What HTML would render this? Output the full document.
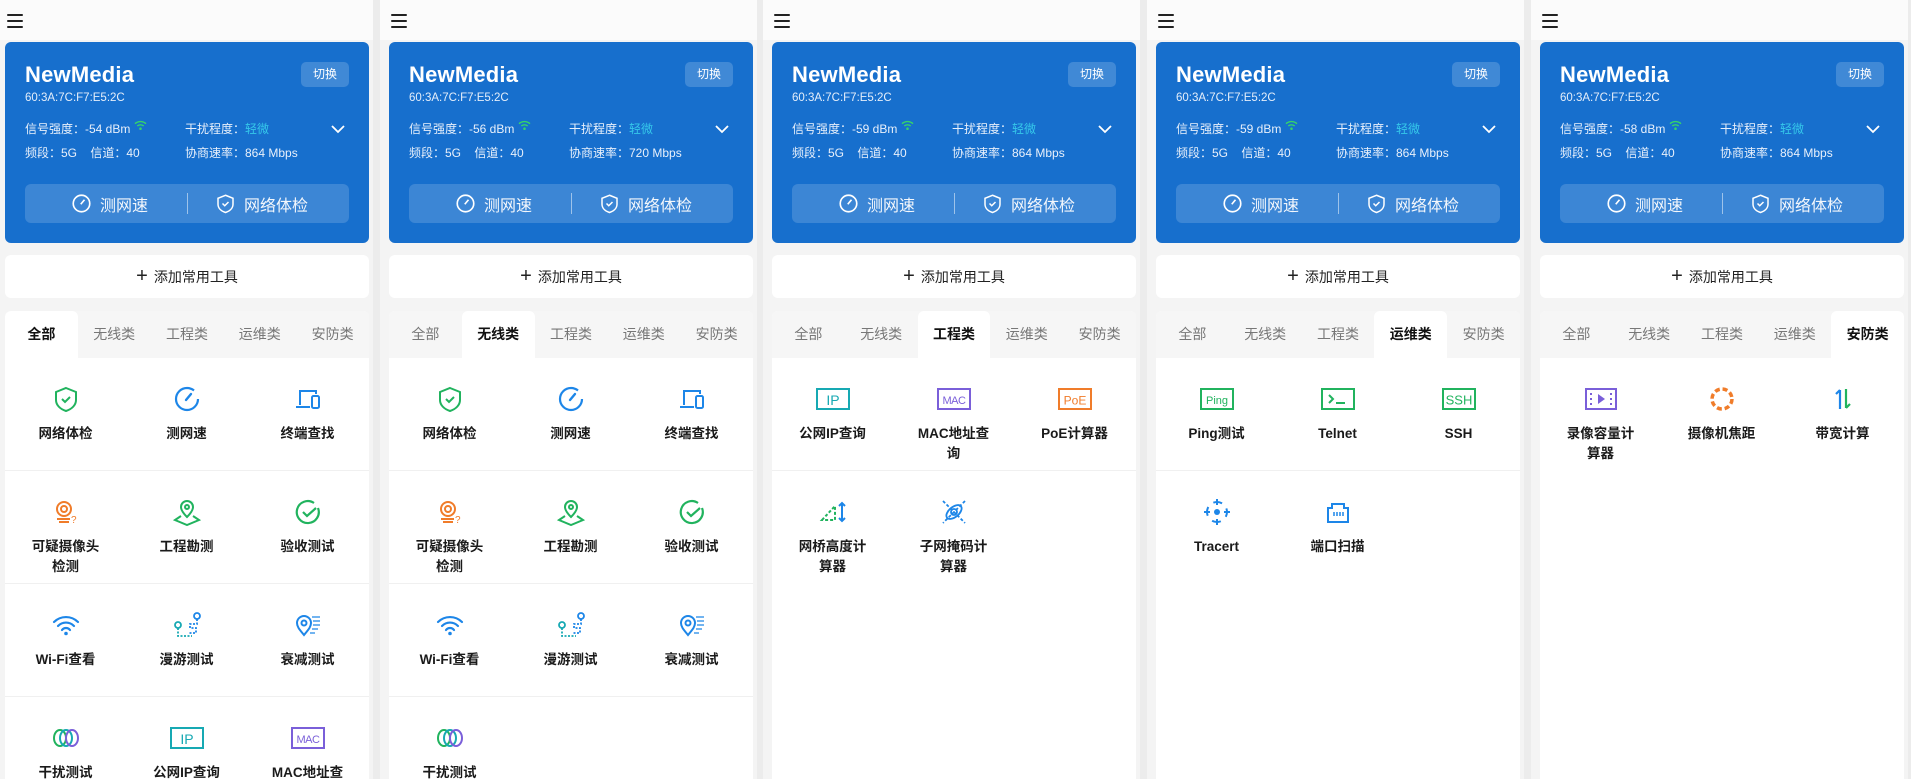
<!DOCTYPE html>
<html><head><meta charset="utf-8">
<style>
*{margin:0;padding:0;box-sizing:border-box}
body{width:1911px;height:779px;overflow:hidden;background:#ececec;font-family:"Liberation Sans","Noto Sans CJK SC",sans-serif;position:relative}
.p{position:absolute;top:0;width:377px;height:779px;background:#f4f4f4;overflow:hidden}
.hd{position:absolute;left:0;top:0;width:100%;height:40px;background:#fbfbfb}
.hb{position:absolute;left:11px;top:14px;width:16px;height:14px}
.hb i{display:block;height:2px;background:#222;margin-bottom:4px;border-radius:1px}
.card{position:absolute;left:9px;top:42px;width:364px;height:201px;background:#176fcd;border-radius:6px;color:#fff}
.nm{position:absolute;left:20px;top:20px;font-size:22px;font-weight:bold;letter-spacing:.2px}
.mac{position:absolute;left:20px;top:50px;font-size:11.5px;color:#e4eefa}
.sw{position:absolute;right:20px;top:20px;width:48px;height:25px;background:rgba(255,255,255,.18);border-radius:5px;font-size:12px;text-align:center;line-height:25px}
.r{position:absolute;font-size:12px;color:#e8f0fb;white-space:nowrap}
.chev{position:absolute;right:24px;top:82px}
.bar{position:absolute;left:20px;top:142px;width:324px;height:39px;background:rgba(255,255,255,.16);border-radius:6px;font-size:16px;color:#f3f7fc}
.bar .a,.bar .b{position:absolute;top:0;height:39px;display:flex;align-items:center;gap:8px}
.bar .a{left:46px}.bar .b{left:190px}
.bar .d{position:absolute;left:162px;top:9px;width:1px;height:21px;background:rgba(255,255,255,.5)}
.add{position:absolute;left:9px;top:255px;width:364px;height:43px;background:#fff;border-radius:6px;font-size:14px;color:#222;display:flex;align-items:center;justify-content:center;gap:6px}
.tl{position:absolute;left:9px;top:311px;width:364px;height:470px;background:#fff;border-radius:6px 6px 0 0;overflow:hidden}
.tabs{height:47px;background:#f6f6f6;display:flex}
.tabs div{width:72.8px;text-align:center;line-height:47px;font-size:14px;color:#777}
.tabs div.on{background:#fff;color:#111;font-weight:bold;border-radius:6px 6px 0 0}
.row{height:113px;border-bottom:1px solid #f0f0f0;display:flex}
.row.nb{border-bottom:none}
.it{width:121px;text-align:center;padding-top:27px}
.it svg{width:28px;height:28px;display:block;margin:0 auto}
.it p{width:70px;margin:11px auto 0;font-size:13.5px;font-weight:bold;color:#1a1a1a;line-height:20px;word-break:break-all}
</style></head><body>
<svg width="0" height="0" style="position:absolute">
<defs>
<symbol id="shield" viewBox="0 0 28 28"><path d="M14 3l10 4v8c0 5-4 9-10 11C8 24 4 20 4 15V7z" fill="none" stroke="#21b35e" stroke-width="2"/><path d="M10 14l3 3 5-5" fill="none" stroke="#21b35e" stroke-width="2"/></symbol>
<symbol id="speed" viewBox="0 0 28 28"><path d="M14 3a11 11 0 1 0 11 11" fill="none" stroke="#1d86e8" stroke-width="2.2"/><path d="M14 3a11 11 0 0 1 7 2.5" fill="none" stroke="#1d86e8" stroke-width="2.2"/><path d="M13 15l5-6" stroke="#1d86e8" stroke-width="2.4" stroke-linecap="round"/></symbol>
<symbol id="term" viewBox="0 0 28 28"><path d="M6 20V6h16v3" fill="none" stroke="#1d86e8" stroke-width="2"/><path d="M2 22h14" stroke="#1d86e8" stroke-width="2"/><rect x="18" y="11" width="7" height="12" rx="1.5" fill="none" stroke="#1d86e8" stroke-width="2"/></symbol>
<symbol id="cam" viewBox="0 0 28 28"><circle cx="12" cy="11" r="7" fill="none" stroke="#f07c2a" stroke-width="2"/><circle cx="12" cy="11" r="3" fill="none" stroke="#f07c2a" stroke-width="2"/><path d="M5 21h13M7 24h10" stroke="#f07c2a" stroke-width="2"/><text x="19" y="25" font-size="10" fill="#f07c2a" font-family="Liberation Sans">?</text></symbol>
<symbol id="survey" viewBox="0 0 28 28"><path d="M14 19c-4-4-6-7-6-10a6 6 0 0 1 12 0c0 3-2 6-6 10z" fill="none" stroke="#21b35e" stroke-width="2"/><circle cx="14" cy="9" r="2" fill="none" stroke="#21b35e" stroke-width="2"/><path d="M8 18l-6 4 12 5 12-5-6-4" fill="none" stroke="#21b35e" stroke-width="2"/></symbol>
<symbol id="check" viewBox="0 0 28 28"><path d="M24 10a11 11 0 1 1-4-5" fill="none" stroke="#21b35e" stroke-width="2.2"/><path d="M9 14l4 4 9-8" fill="none" stroke="#21b35e" stroke-width="2.2"/></symbol>
<symbol id="wifi" viewBox="0 0 28 28"><path d="M2 11a17 17 0 0 1 24 0M6 15a11 11 0 0 1 16 0M10 19a5 5 0 0 1 8 0" fill="none" stroke="#1d86e8" stroke-width="2.2" stroke-linecap="round"/><circle cx="14" cy="22.5" r="1.8" fill="#1d86e8"/></symbol>
<symbol id="roam" viewBox="0 0 28 28"><circle cx="5" cy="14" r="3" fill="none" stroke="#17a9b3" stroke-width="1.8"/><path d="M5 17v8h14" fill="none" stroke="#17a9b3" stroke-width="1.8" stroke-dasharray="2 1.5"/><circle cx="24" cy="5" r="3" fill="none" stroke="#1d86e8" stroke-width="1.8"/><path d="M24 8v5h-7v4h6v5h-8" fill="none" stroke="#1d86e8" stroke-width="1.8" stroke-dasharray="2 1.5"/></symbol>
<symbol id="atten" viewBox="0 0 28 28"><path d="M10 24c-4-5-7-8-7-12a7 7 0 0 1 14 0c0 4-3 7-7 12z" fill="none" stroke="#1d86e8" stroke-width="2"/><circle cx="10" cy="12" r="2.5" fill="none" stroke="#1d86e8" stroke-width="2"/><path d="M18 6h8M19 10h7M19 14h7M18 18h6M16 22h5" stroke="#1d86e8" stroke-width="1.3"/></symbol>
<symbol id="interf" viewBox="0 0 28 28"><ellipse cx="8" cy="14" rx="6" ry="8" fill="none" stroke="#21b35e" stroke-width="2"/><ellipse cx="14" cy="14" rx="6" ry="8" fill="none" stroke="#17a9b3" stroke-width="2"/><ellipse cx="20" cy="14" rx="6" ry="8" fill="none" stroke="#7a5fd9" stroke-width="2"/></symbol>
<symbol id="ip" viewBox="0 0 34 28"><rect x="1" y="4" width="32" height="20" fill="none" stroke="#17a9b3" stroke-width="2"/><text x="17" y="20" text-anchor="middle" font-size="14" fill="#17a9b3" font-family="Liberation Sans">IP</text></symbol>
<symbol id="mac" viewBox="0 0 34 28"><rect x="1" y="4" width="32" height="20" fill="none" stroke="#7a5fd9" stroke-width="2"/><text x="17" y="19" text-anchor="middle" font-size="11" fill="#7a5fd9" font-family="Liberation Sans" letter-spacing="-0.5">MAC</text></symbol>
<symbol id="poe" viewBox="0 0 34 28"><rect x="1" y="4" width="32" height="20" fill="none" stroke="#f07c2a" stroke-width="2"/><text x="17" y="19.5" text-anchor="middle" font-size="12" fill="#f07c2a" font-family="Liberation Sans">PoE</text></symbol>
<symbol id="bridge" viewBox="0 0 28 28"><path d="M3 22L16 8v14z" fill="none" stroke="#21b35e" stroke-width="2" stroke-dasharray="3 2"/><path d="M23 5v18M20 8l3-3 3 3M20 20l3 3 3-3" fill="none" stroke="#1d86e8" stroke-width="2"/></symbol>
<symbol id="subnet" viewBox="0 0 28 28"><path d="M3 3l22 22M25 3L3 25" stroke="#1d86e8" stroke-width="1.8" stroke-dasharray="3 2"/><ellipse cx="14" cy="14" rx="9" ry="5" transform="rotate(-40 14 14)" fill="none" stroke="#1d86e8" stroke-width="1.8"/><circle cx="14" cy="14" r="3" fill="none" stroke="#1d86e8" stroke-width="1.8"/></symbol>
<symbol id="ping" viewBox="0 0 34 28"><rect x="1" y="4" width="32" height="20" fill="none" stroke="#21b35e" stroke-width="2"/><text x="17" y="19" text-anchor="middle" font-size="11" fill="#21b35e" font-family="Liberation Sans">Ping</text></symbol>
<symbol id="telnet" viewBox="0 0 34 28"><rect x="1" y="4" width="32" height="20" fill="none" stroke="#21b35e" stroke-width="2"/><path d="M8 10l4 4-4 4M15 18h9" fill="none" stroke="#21b35e" stroke-width="2"/></symbol>
<symbol id="ssh" viewBox="0 0 34 28"><rect x="1" y="4" width="32" height="20" fill="none" stroke="#21b35e" stroke-width="2"/><text x="17" y="19.5" text-anchor="middle" font-size="13" fill="#21b35e" font-family="Liberation Sans">SSH</text></symbol>
<symbol id="tracert" viewBox="0 0 28 28"><circle cx="14" cy="14" r="10" fill="none" stroke="#1d86e8" stroke-width="2" stroke-dasharray="9 6.7" stroke-dashoffset="4"/><path d="M14 1v6M14 21v6M1 14h6M21 14h6" stroke="#1d86e8" stroke-width="2"/><circle cx="14" cy="14" r="3" fill="#1d86e8"/></symbol>
<symbol id="port" viewBox="0 0 28 28"><path d="M4 10h4V6h12v4h4v14H4z" fill="none" stroke="#1d86e8" stroke-width="2"/><path d="M10 14v4M13 14v4M16 14v4M19 14v4" stroke="#1d86e8" stroke-width="1.5"/></symbol>
<symbol id="video" viewBox="0 0 34 28"><rect x="2" y="4" width="30" height="20" fill="none" stroke="#7a5fd9" stroke-width="2"/><path d="M14 9v10l7-5z" fill="#7a5fd9"/><path d="M7 8v2M7 13v2M7 18v2M27 8v2M27 13v2M27 18v2" stroke="#7a5fd9" stroke-width="2"/></symbol>
<symbol id="lens" viewBox="0 0 28 28"><circle cx="14" cy="14" r="10" fill="none" stroke="#f07c2a" stroke-width="3.5" stroke-dasharray="5 2.9"/></symbol>
<symbol id="bw" viewBox="0 0 28 28"><path d="M11 24V5M7 9l4-4" fill="none" stroke="#1d86e8" stroke-width="2.2"/><path d="M17 4v19M21 19l-4 4" fill="none" stroke="#21b35e" stroke-width="2.2"/></symbol>
<symbol id="swifi" viewBox="0 0 14 12"><path d="M1 4a9 9 0 0 1 12 0M3.5 6.5a5.5 5.5 0 0 1 7 0" fill="none" stroke="#36d36a" stroke-width="1.6"/><circle cx="7" cy="9.5" r="1.4" fill="#36d36a"/></symbol>
<symbol id="bspd" viewBox="0 0 28 28"><path d="M14 3a11 11 0 1 0 11 11A11 11 0 0 0 14 3zM13 15l5-6" fill="none" stroke="#fff" stroke-width="2.2"/></symbol>
<symbol id="bshd" viewBox="0 0 28 28"><path d="M14 3l10 4v8c0 5-4 9-10 11C8 24 4 20 4 15V7z M10 14l3 3 5-5" fill="none" stroke="#fff" stroke-width="2"/></symbol>
</defs></svg>

<div class="p" style="left:-4px">
<div class="hd"><div class="hb"><i></i><i></i><i></i></div></div>
<div class="card"><div class="nm">NewMedia</div><div class="mac">60:3A:7C:F7:E5:2C</div><div class="sw">切换</div>
<div class="r" style="left:20px;top:78px">信号强度：-54 dBm <svg width="13" height="11" style="vertical-align:2px"><use href="#swifi"/></svg></div>
<div class="r" style="left:180px;top:78px">干扰程度：<span style="color:#35c8ea">轻微</span></div>
<div class="r" style="left:20px;top:102px">频段：5G&nbsp;&nbsp;&nbsp; 信道：40</div>
<div class="r" style="left:180px;top:102px">协商速率：864 Mbps</div>
<svg class="chev" width="14" height="10"><path d="M1 2l6 6 6-6" fill="none" stroke="#fff" stroke-width="1.8"/></svg>
<div class="bar"><div class="a"><svg width="21" height="21"><use href="#bspd"/></svg>测网速</div><div class="d"></div><div class="b"><svg width="21" height="21"><use href="#bshd"/></svg>网络体检</div></div></div>
<div class="add"><span style="font-size:20px;font-weight:300">+</span>添加常用工具</div>
<div class="tl"><div class="tabs"><div class="on">全部</div><div>无线类</div><div>工程类</div><div>运维类</div><div>安防类</div></div>
<div class="row"><div class="it"><svg><use href="#shield"/></svg><p>网络体检</p></div><div class="it"><svg><use href="#speed"/></svg><p>测网速</p></div><div class="it"><svg><use href="#term"/></svg><p>终端查找</p></div></div>
<div class="row"><div class="it"><svg><use href="#cam"/></svg><p>可疑摄像头检测</p></div><div class="it"><svg><use href="#survey"/></svg><p>工程勘测</p></div><div class="it"><svg><use href="#check"/></svg><p>验收测试</p></div></div>
<div class="row"><div class="it"><svg><use href="#wifi"/></svg><p>Wi-Fi查看</p></div><div class="it"><svg><use href="#roam"/></svg><p>漫游测试</p></div><div class="it"><svg><use href="#atten"/></svg><p>衰减测试</p></div></div>
<div class="row"><div class="it"><svg><use href="#interf"/></svg><p>干扰测试</p></div><div class="it"><svg viewBox="0 0 34 28" style="width:34px"><use href="#ip"/></svg><p style="width:90px">公网IP查询</p></div><div class="it"><svg viewBox="0 0 34 28" style="width:34px"><use href="#mac"/></svg><p style="width:80px">MAC地址查询</p></div></div>
</div></div>

<div class="p" style="left:380px">
<div class="hd"><div class="hb"><i></i><i></i><i></i></div></div>
<div class="card"><div class="nm">NewMedia</div><div class="mac">60:3A:7C:F7:E5:2C</div><div class="sw">切换</div>
<div class="r" style="left:20px;top:78px">信号强度：-56 dBm <svg width="13" height="11" style="vertical-align:2px"><use href="#swifi"/></svg></div>
<div class="r" style="left:180px;top:78px">干扰程度：<span style="color:#35c8ea">轻微</span></div>
<div class="r" style="left:20px;top:102px">频段：5G&nbsp;&nbsp;&nbsp; 信道：40</div>
<div class="r" style="left:180px;top:102px">协商速率：720 Mbps</div>
<svg class="chev" width="14" height="10"><path d="M1 2l6 6 6-6" fill="none" stroke="#fff" stroke-width="1.8"/></svg>
<div class="bar"><div class="a"><svg width="21" height="21"><use href="#bspd"/></svg>测网速</div><div class="d"></div><div class="b"><svg width="21" height="21"><use href="#bshd"/></svg>网络体检</div></div></div>
<div class="add"><span style="font-size:20px;font-weight:300">+</span>添加常用工具</div>
<div class="tl"><div class="tabs"><div>全部</div><div class="on">无线类</div><div>工程类</div><div>运维类</div><div>安防类</div></div>
<div class="row"><div class="it"><svg><use href="#shield"/></svg><p>网络体检</p></div><div class="it"><svg><use href="#speed"/></svg><p>测网速</p></div><div class="it"><svg><use href="#term"/></svg><p>终端查找</p></div></div>
<div class="row"><div class="it"><svg><use href="#cam"/></svg><p>可疑摄像头检测</p></div><div class="it"><svg><use href="#survey"/></svg><p>工程勘测</p></div><div class="it"><svg><use href="#check"/></svg><p>验收测试</p></div></div>
<div class="row"><div class="it"><svg><use href="#wifi"/></svg><p>Wi-Fi查看</p></div><div class="it"><svg><use href="#roam"/></svg><p>漫游测试</p></div><div class="it"><svg><use href="#atten"/></svg><p>衰减测试</p></div></div>
<div class="row nb"><div class="it"><svg><use href="#interf"/></svg><p>干扰测试</p></div></div>
</div></div>

<div class="p" style="left:763px">
<div class="hd"><div class="hb"><i></i><i></i><i></i></div></div>
<div class="card"><div class="nm">NewMedia</div><div class="mac">60:3A:7C:F7:E5:2C</div><div class="sw">切换</div>
<div class="r" style="left:20px;top:78px">信号强度：-59 dBm <svg width="13" height="11" style="vertical-align:2px"><use href="#swifi"/></svg></div>
<div class="r" style="left:180px;top:78px">干扰程度：<span style="color:#35c8ea">轻微</span></div>
<div class="r" style="left:20px;top:102px">频段：5G&nbsp;&nbsp;&nbsp; 信道：40</div>
<div class="r" style="left:180px;top:102px">协商速率：864 Mbps</div>
<svg class="chev" width="14" height="10"><path d="M1 2l6 6 6-6" fill="none" stroke="#fff" stroke-width="1.8"/></svg>
<div class="bar"><div class="a"><svg width="21" height="21"><use href="#bspd"/></svg>测网速</div><div class="d"></div><div class="b"><svg width="21" height="21"><use href="#bshd"/></svg>网络体检</div></div></div>
<div class="add"><span style="font-size:20px;font-weight:300">+</span>添加常用工具</div>
<div class="tl"><div class="tabs"><div>全部</div><div>无线类</div><div class="on">工程类</div><div>运维类</div><div>安防类</div></div>
<div class="row"><div class="it"><svg viewBox="0 0 34 28" style="width:34px"><use href="#ip"/></svg><p style="width:90px">公网IP查询</p></div><div class="it"><svg viewBox="0 0 34 28" style="width:34px"><use href="#mac"/></svg><p style="width:80px">MAC地址查询</p></div><div class="it"><svg viewBox="0 0 34 28" style="width:34px"><use href="#poe"/></svg><p style="width:100px">PoE计算器</p></div></div>
<div class="row nb"><div class="it"><svg><use href="#bridge"/></svg><p>网桥高度计算器</p></div><div class="it"><svg><use href="#subnet"/></svg><p>子网掩码计算器</p></div></div>
</div></div>

<div class="p" style="left:1147px">
<div class="hd"><div class="hb"><i></i><i></i><i></i></div></div>
<div class="card"><div class="nm">NewMedia</div><div class="mac">60:3A:7C:F7:E5:2C</div><div class="sw">切换</div>
<div class="r" style="left:20px;top:78px">信号强度：-59 dBm <svg width="13" height="11" style="vertical-align:2px"><use href="#swifi"/></svg></div>
<div class="r" style="left:180px;top:78px">干扰程度：<span style="color:#35c8ea">轻微</span></div>
<div class="r" style="left:20px;top:102px">频段：5G&nbsp;&nbsp;&nbsp; 信道：40</div>
<div class="r" style="left:180px;top:102px">协商速率：864 Mbps</div>
<svg class="chev" width="14" height="10"><path d="M1 2l6 6 6-6" fill="none" stroke="#fff" stroke-width="1.8"/></svg>
<div class="bar"><div class="a"><svg width="21" height="21"><use href="#bspd"/></svg>测网速</div><div class="d"></div><div class="b"><svg width="21" height="21"><use href="#bshd"/></svg>网络体检</div></div></div>
<div class="add"><span style="font-size:20px;font-weight:300">+</span>添加常用工具</div>
<div class="tl"><div class="tabs"><div>全部</div><div>无线类</div><div>工程类</div><div class="on">运维类</div><div>安防类</div></div>
<div class="row"><div class="it"><svg viewBox="0 0 34 28" style="width:34px"><use href="#ping"/></svg><p style="width:90px">Ping测试</p></div><div class="it"><svg viewBox="0 0 34 28" style="width:34px"><use href="#telnet"/></svg><p>Telnet</p></div><div class="it"><svg viewBox="0 0 34 28" style="width:34px"><use href="#ssh"/></svg><p>SSH</p></div></div>
<div class="row nb"><div class="it"><svg><use href="#tracert"/></svg><p>Tracert</p></div><div class="it"><svg><use href="#port"/></svg><p>端口扫描</p></div></div>
</div></div>

<div class="p" style="left:1531px">
<div class="hd"><div class="hb"><i></i><i></i><i></i></div></div>
<div class="card"><div class="nm">NewMedia</div><div class="mac">60:3A:7C:F7:E5:2C</div><div class="sw">切换</div>
<div class="r" style="left:20px;top:78px">信号强度：-58 dBm <svg width="13" height="11" style="vertical-align:2px"><use href="#swifi"/></svg></div>
<div class="r" style="left:180px;top:78px">干扰程度：<span style="color:#35c8ea">轻微</span></div>
<div class="r" style="left:20px;top:102px">频段：5G&nbsp;&nbsp;&nbsp; 信道：40</div>
<div class="r" style="left:180px;top:102px">协商速率：864 Mbps</div>
<svg class="chev" width="14" height="10"><path d="M1 2l6 6 6-6" fill="none" stroke="#fff" stroke-width="1.8"/></svg>
<div class="bar"><div class="a"><svg width="21" height="21"><use href="#bspd"/></svg>测网速</div><div class="d"></div><div class="b"><svg width="21" height="21"><use href="#bshd"/></svg>网络体检</div></div></div>
<div class="add"><span style="font-size:20px;font-weight:300">+</span>添加常用工具</div>
<div class="tl"><div class="tabs"><div>全部</div><div>无线类</div><div>工程类</div><div>运维类</div><div class="on">安防类</div></div>
<div class="row nb"><div class="it"><svg viewBox="0 0 34 28" style="width:34px"><use href="#video"/></svg><p>录像容量计算器</p></div><div class="it"><svg><use href="#lens"/></svg><p style="width:90px">摄像机焦距</p></div><div class="it"><svg><use href="#bw"/></svg><p>带宽计算</p></div></div>
</div></div>
</body></html>
